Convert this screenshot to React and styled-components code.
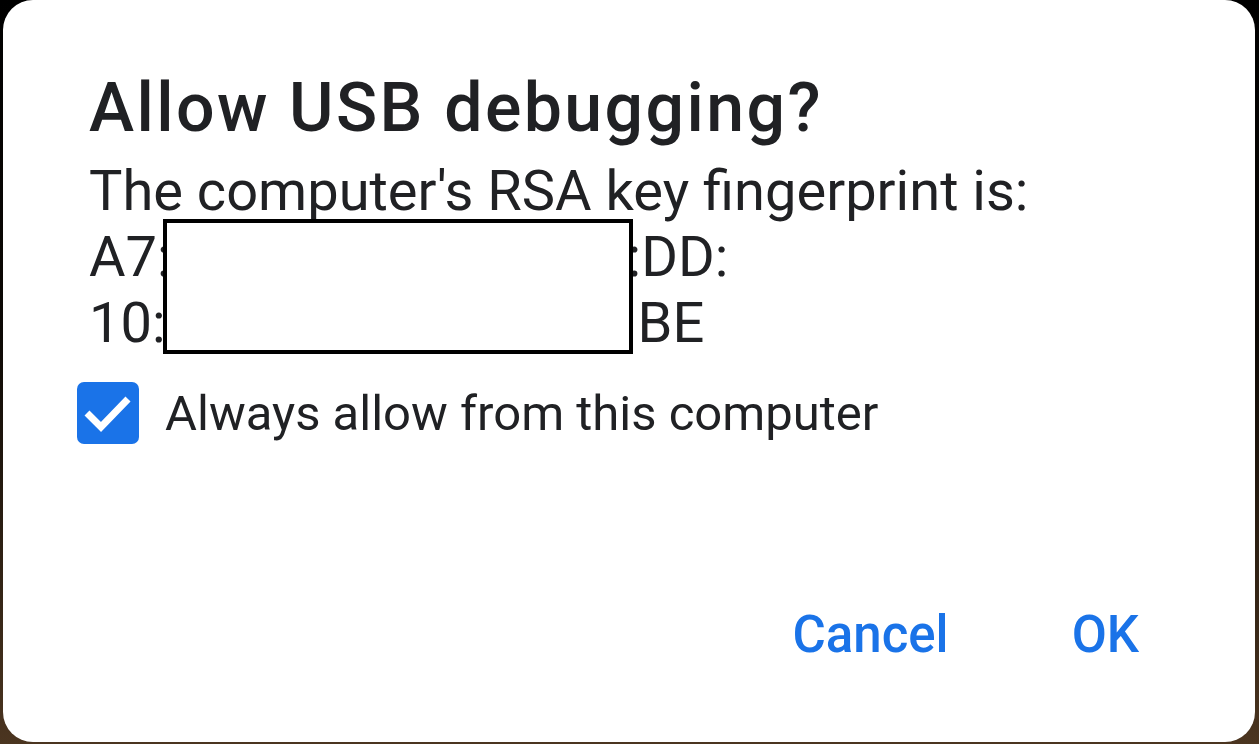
import React from "react";
import styled, { createGlobalStyle } from "styled-components";

const Global = createGlobalStyle`
  html, body {
    margin: 0;
    padding: 0;
  }
  body {
    width: 1259px;
    height: 744px;
    overflow: hidden;
    background: linear-gradient(180deg, #000 0%, #0d0905 45%, #4b3520 100%);
    font-family: Roboto, "Liberation Sans", sans-serif;
  }
`;

const Screen = styled.div`
  width: 1259px;
  height: 744px;
  padding: 0 4px 2px 3px;
  box-sizing: border-box;
`;

const Dialog = styled.div`
  height: 100%;
  background: #fff;
  border-radius: 30px;
  box-sizing: border-box;
  padding: 72px 116px 78px 86px;
  display: flex;
  flex-direction: column;
`;

const Title = styled.h1`
  margin: 0;
  font-family: Roboto, "Liberation Sans", sans-serif;
  font-weight: 500;
  font-size: 68px;
  letter-spacing: 2.4px;
  line-height: 72px;
  color: #202124;
`;

const Body = styled.div`
  margin-top: 14px;
  font-size: 56px;
  line-height: 66px;
  color: #202124;
`;

const Fingerprint = styled.div`
  position: relative;
`;

const Gap = styled.span`
  display: inline-block;
  width: ${(p) => p.w}px;
`;

const Redaction = styled.div`
  position: absolute;
  left: 74px;
  top: -5px;
  width: 470px;
  height: 135px;
  box-sizing: border-box;
  border: 4px solid #000;
  background: #fff;
`;

const CheckRow = styled.label`
  margin-top: 26px;
  display: flex;
  align-items: center;
  gap: 26px;
  margin-left: -12px;
  font-size: 49px;
  color: #202124;
`;

const Box = styled.span`
  width: 62px;
  height: 62px;
  border-radius: 7px;
  background: #1a73e8;
  display: block;
  flex-shrink: 0;
`;

const Actions = styled.div`
  margin-top: auto;
  display: flex;
  justify-content: flex-end;
  gap: 123px;
`;

const Action = styled.button`
  border: none;
  background: none;
  padding: 0;
  font-family: Roboto, "Liberation Sans", sans-serif;
  font-weight: 500;
  font-size: 51px;
  color: #1a73e8;
  cursor: pointer;
`;

export default function App() {
  return (
    <>
      <Global />
      <Screen>
        <Dialog>
          <Title>Allow USB debugging?</Title>
          <Body>
            The computer's RSA key fingerprint is:
            <Fingerprint>
              <div>
                A7:<Gap w={457} />:DD:
              </div>
              <div>
                10:<Gap w={472} />BE
              </div>
              <Redaction />
            </Fingerprint>
          </Body>
          <CheckRow>
            <Box>
              <svg width="62" height="62" viewBox="0 0 62 62">
                <path d="M10 31 L24 45 L51 17" fill="none" stroke="#fff" strokeWidth="7" />
              </svg>
            </Box>
            Always allow from this computer
          </CheckRow>
          <Actions>
            <Action>Cancel</Action>
            <Action>OK</Action>
          </Actions>
        </Dialog>
      </Screen>
    </>
  );
}
